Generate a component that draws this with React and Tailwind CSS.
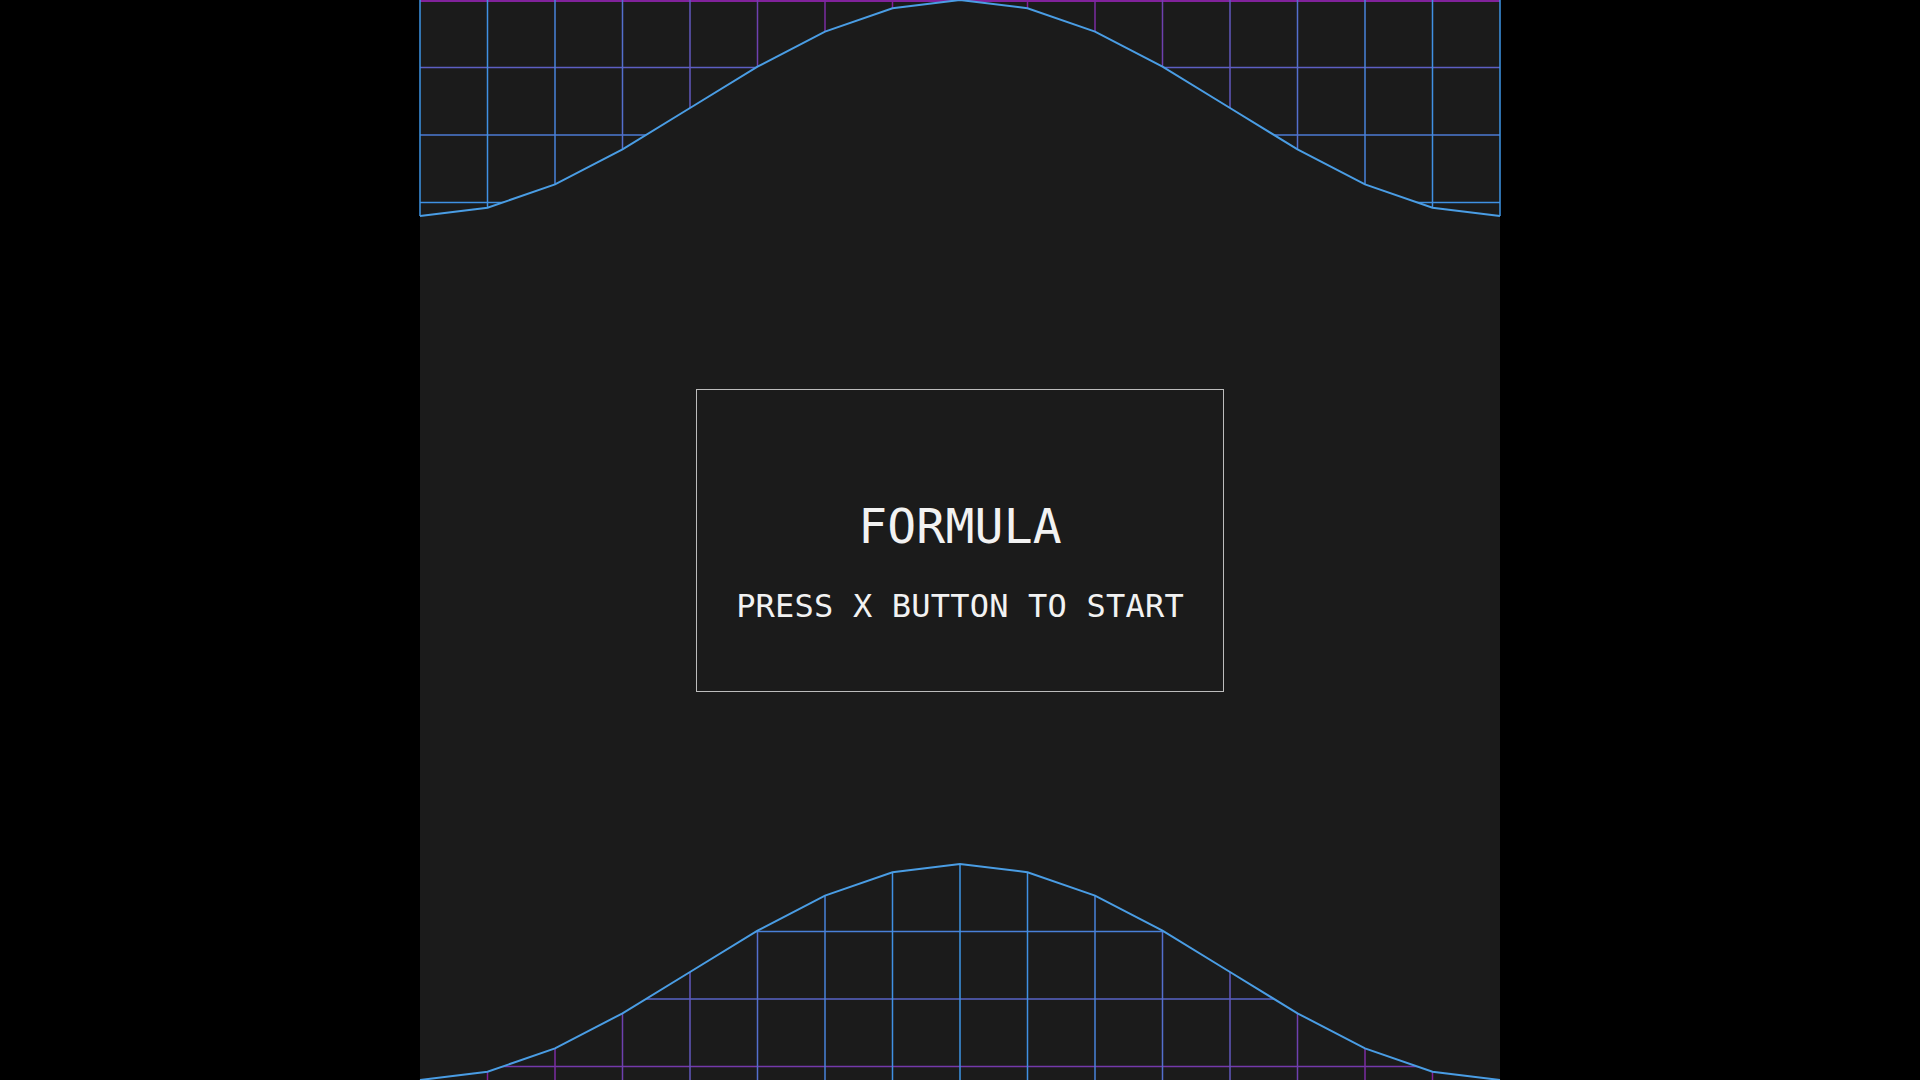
const W = 1080
const H = 216
const STEP = 67.5
const MONO = { fontFamily: '"DejaVu Sans Mono", "Liberation Mono", monospace' }

// wave height at grid column k (0..16), cosine hill peaking in the middle
const waveY = (k) => 108 * (1 - Math.cos((Math.PI * (k - 8)) / 8))
const cols = Array.from({ length: 17 }, (_, k) => k)
const curve = cols.map((k) => [k * STEP, waveY(k)])
const curvePts = curve.map(([x, y]) => `${x},${y}`).join(' ')

// magenta -> blue
const mix = (s) => {
  const a = [134, 26, 150]
  const b = [61, 149, 230]
  const c = a.map((v, i) => Math.round(v + (b[i] - v) * s))
  return `rgb(${c[0]},${c[1]},${c[2]})`
}
const clamp = (t) => Math.min(Math.max(t, 0), 1)
const rowColor = (t) => mix(Math.sqrt(clamp(t)))
const colColor = (t) => mix(clamp(t))

function TopWave() {
  return (
    <svg className="block shrink-0 overflow-visible" width={W} height={H} viewBox={`0 0 ${W} ${H}`}>
      {[1, 67.5, 135, 202.5].map((y) => (
        <line key={y} x1={0} x2={W} y1={y} y2={y} stroke={rowColor(y / H)} strokeWidth={y === 1 ? 2 : 1.5} />
      ))}
      {curve.map(([x, y]) => (
        <line key={x} x1={x} x2={x} y1={0} y2={y} stroke={colColor(y / H)} strokeWidth={1.5} />
      ))}
      <polygon points={`${curvePts} ${W},${H + 4} 0,${H + 4}`} fill="#1b1b1b" />
      <polyline points={curvePts} fill="none" stroke="#4a9de4" strokeWidth={2} />
    </svg>
  )
}

function BottomWave() {
  return (
    <svg className="block shrink-0 overflow-visible" width={W} height={H} viewBox={`0 0 ${W} ${H}`}>
      {[67.5, 135, 202.5].map((y) => (
        <line key={y} x1={0} x2={W} y1={y} y2={y} stroke={rowColor(1 - y / H)} strokeWidth={1.5} />
      ))}
      {curve.map(([x, y]) => (
        <line key={x} x1={x} x2={x} y1={y} y2={H} stroke={colColor(1 - y / H)} strokeWidth={1.5} />
      ))}
      <polygon points={`${curvePts} ${W},-4 0,-4`} fill="#1b1b1b" />
      <polyline points={curvePts} fill="none" stroke="#4a9de4" strokeWidth={2} />
    </svg>
  )
}

export default function App() {
  return (
    <div className="w-full h-screen bg-black flex justify-center overflow-hidden">
      <div className="w-[1080px] h-[1080px] bg-[#1b1b1b] flex flex-col">
        <TopWave />

        {/* Title card */}
        <div className="flex-1 flex items-center justify-center">
          <div className="w-[528px] h-[303px] border border-[#bdbdbd] flex flex-col items-center pt-[112px] text-[#f2f2f2]" style={MONO}>
            <h1 className="text-[48px] leading-[48px] tracking-[0.2px]">FORMULA</h1>
            <p className="mt-[40px] text-[32px] leading-[32px] tracking-[0.2px]">PRESS X BUTTON TO START</p>
          </div>
        </div>

        <BottomWave />
      </div>
    </div>
  )
}
